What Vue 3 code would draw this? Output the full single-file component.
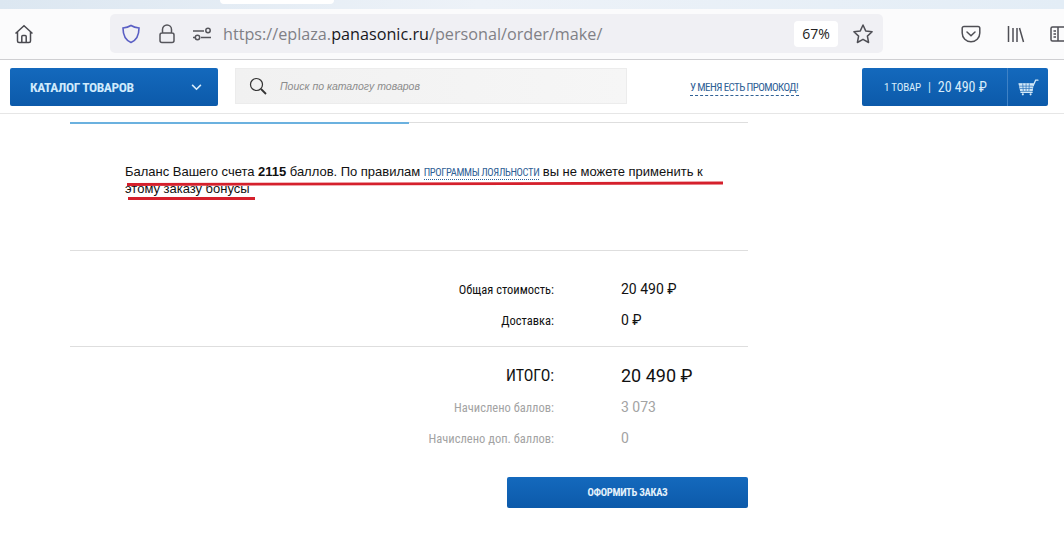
<script setup>
const totals = [
  { label: 'Общая стоимость:', value: '20 490 ₽' },
  { label: 'Доставка:', value: '0 ₽' },
]
const bonuses = [
  { label: 'Начислено баллов:', value: '3 073' },
  { label: 'Начислено доп. баллов:', value: '0' },
]
</script>

<template>
  <div class="page">
    <div class="tabstrip"><div class="tab-stub"></div></div>

    <div class="toolbar">
      <svg class="home" viewBox="0 0 20 20" width="20" height="20" fill="none" stroke="#4a4a50" stroke-width="1.5">
        <path d="M1.500 9.500 10 1.800l8.500 7.700M3.500 8v9a1.500 1.500 0 0 0 1.500 1.500h10a1.500 1.500 0 0 0 1.500-1.500V8M7.800 18.500v-6a1 1 0 0 1 1-1h2.400a1 1 0 0 1 1 1v6" />
      </svg>
      <div class="urlbar">
        <svg viewBox="0 0 20 20" width="20" height="20" fill="none" stroke="#5a5fc4" stroke-width="1.6">
          <path d="M10 1.500c2.400 1.500 5 2.200 8 2.500 0 7-2 12-8 14.500C4 16 2 11 2 4c3-.3 5.600-1 8-2.500z" />
        </svg>
        <svg class="lock" viewBox="0 0 18 20" width="18" height="20" fill="none" stroke="#55555b" stroke-width="1.5">
          <path d="M4.500 9V5.500a4.500 4.500 0 0 1 9 0V9M4 9h10a2 2 0 0 1 2 2v5.500a2 2 0 0 1-2 2H4a2 2 0 0 1-2-2V11a2 2 0 0 1 2-2z" />
        </svg>
        <svg class="sliders" viewBox="0 0 20 14" width="20" height="14" fill="none" stroke="#55555b" stroke-width="1.500">
          <path d="M1 4h11M1 10.500h2M9 10.500h10" />
          <circle cx="16" cy="3.500" r="2.200" />
          <circle cx="5.500" cy="10.500" r="2.200" />
        </svg>
        <div class="url">https://eplaza.<span class="host">panasonic.ru</span>/personal/order/make/</div>
        <div class="zoom-pill">67%</div>
        <svg class="star" viewBox="0 0 22 22" width="22" height="22" fill="none" stroke="#4f4f55" stroke-width="1.500" stroke-linejoin="round">
          <path d="m11 2 2.700 5.900 6.400.8-4.700 4.400 1.200 6.400L11 16.300l-5.600 3.200 1.200-6.400-4.700-4.400 6.400-.8z" />
        </svg>
      </div>
      <svg class="pocket" viewBox="0 0 20 18" width="20" height="18" fill="none" stroke="#4f4f55" stroke-width="1.500">
        <path d="M3 1.500h14a1.800 1.800 0 0 1 1.800 1.800V8a8.800 8.800 0 0 1-17.600 0V3.300A1.800 1.800 0 0 1 3 1.500z" />
        <path d="m6 7 4 3.800L14 7" stroke-linecap="round" />
      </svg>
      <svg class="library" viewBox="0 0 18 18" width="18" height="18" fill="none" stroke="#4f4f55" stroke-width="1.500">
        <path d="M1.500 1v16M6 3v14M10 3v14M12.500 3l4 14" />
      </svg>
      <svg class="sidebar" viewBox="0 0 18 16" width="18" height="16" fill="none" stroke="#4f4f55" stroke-width="1.500">
        <path d="M2.500 1h20v14h-20a1.500 1.500 0 0 1-1.500-1.500v-11A1.500 1.500 0 0 1 2.500 1zM8 1v14M3.500 5H6M3.500 8H6M3.500 11H6" />
      </svg>
    </div>

    <header class="site-header">
      <button class="catalog-btn">
        <span class="narrow catalog-label">КАТАЛОГ ТОВАРОВ</span>
        <svg viewBox="0 0 12 8" width="11" height="7" fill="none" stroke="#d8ecfa" stroke-width="1.800"><path d="m1 1 5 5 5-5" /></svg>
      </button>
      <div class="search">
        <svg viewBox="0 0 18 18" width="18" height="18" fill="none" stroke="#333" stroke-width="1.200">
          <circle cx="7.500" cy="7.500" r="6" />
          <path d="m12 12 5 5" stroke-width="1.800" />
        </svg>
        <span class="search-text">Поиск по каталогу товаров</span>
      </div>
      <a class="promo narrow">У МЕНЯ ЕСТЬ ПРОМОКОД!</a>
      <div class="cart">
        <div class="cart-sum narrow">
          <span>1 ТОВАР</span>
          <span class="cart-sep">|</span>
          <span class="cart-price">20 490 ₽</span>
        </div>
        <div class="cart-icon">
          <svg viewBox="0 0 20 16" width="21" height="17" fill="none" stroke="#d4e9f8" stroke-linecap="round">
            <path d="M1 4.500h13.500l-1 6.500H2.500z" fill="#d4e9f8" stroke-width="1" />
            <path d="M1.500 6.700h12.500M2 8.900h11.500M4.500 4.500 5 11M7.700 4.500V11M10.800 4.500 10.400 11" stroke="#2a74bd" stroke-width=".7" />
            <path d="M14.500 6 16.800 1H19M2.800 12.600h10.700" stroke-width="1.200" />
            <circle cx="4.600" cy="14.500" r="1" fill="#d4e9f8" stroke="none" />
            <circle cx="12" cy="14.500" r="1" fill="#d4e9f8" stroke="none" />
          </svg>
        </div>
      </div>
    </header>

    <main class="order">
      <div class="steps"><div class="steps-active"></div></div>

      <p class="balance">
        Баланс Вашего счета <b>2115</b> баллов. По правилам
        <a class="loyalty narrow">ПРОГРАММЫ ЛОЯЛЬНОСТИ</a>
        вы не можете применить к этому заказу бонусы
      </p>

      <div class="summary">
        <div class="rows first-rows">
          <div v-for="row in totals" :key="row.label" class="row">
            <span class="label narrow">{{ row.label }}</span>
            <span class="value">{{ row.value }}</span>
          </div>
        </div>
        <div class="rows second-rows">
          <div class="row total">
            <span class="label narrow">ИТОГО:</span>
            <span class="value">20 490 ₽</span>
          </div>
          <div v-for="row in bonuses" :key="row.label" class="row muted">
            <span class="label narrow">{{ row.label }}</span>
            <span class="value">{{ row.value }}</span>
          </div>
        </div>
        <div class="actions">
          <button class="submit narrow">ОФОРМИТЬ ЗАКАЗ</button>
        </div>
      </div>
    </main>

    <svg class="marks" width="1064" height="539" fill="none" stroke="#d5202c" stroke-width="2.800">
      <path d="M127 184.500 723 183" />
      <path d="M128 198.500h127" />
    </svg>
  </div>
</template>

<style scoped>
.page {
  position: relative;
  width: 1064px;
  height: 539px;
  overflow: hidden;
  background: #fff;
  font-family: "Liberation Sans", Arial, sans-serif;
  color: #111;
}
.narrow {
  font-family: "Roboto", "Open Sans", sans-serif;
  font-stretch: 75%;
}

.tabstrip {
  height: 9px;
  background: linear-gradient(90deg, #dce7f1, #edf2f8 45%, #e3edf6);
}
.tab-stub {
  width: 114px;
  height: 4px;
  margin-left: 220px;
  background: #fff;
  border-radius: 0 0 4px 4px;
}
.toolbar {
  height: 51px;
  box-sizing: border-box;
  display: flex;
  align-items: center;
  padding: 0 0 1px 14px;
  background: #fbfbfc;
  border-bottom: 1px solid #cfcfd2;
}
.toolbar > svg,
.urlbar > svg {
  flex: none;
}
.urlbar {
  flex: none;
  width: 773px;
  height: 39px;
  margin-left: 76px;
  display: flex;
  align-items: center;
  box-sizing: border-box;
  padding-left: 11px;
  background: #f0f0f4;
  border-radius: 5px;
}
.lock {
  margin-left: 17px;
}
.sliders {
  margin-left: 16px;
}
.url {
  flex: 1;
  margin-left: 11px;
  font-family: "Open Sans", sans-serif;
  font-size: 16.200px;
  color: #808086;
  white-space: nowrap;
}
.host {
  color: #18181c;
}
.zoom-pill {
  width: 44px;
  height: 26px;
  line-height: 26px;
  text-align: center;
  background: #fff;
  border-radius: 4px;
  font-family: "Open Sans", sans-serif;
  font-size: 14px;
  color: #222;
}
.star {
  margin: 0 9px 0 14px;
}
.pocket {
  margin-left: 78px;
}
.library {
  margin-left: 26px;
}
.sidebar {
  margin-left: 25px;
  overflow: hidden;
}

.site-header {
  height: 54px;
  box-sizing: border-box;
  display: flex;
  align-items: flex-start;
  padding: 8px 16px 0 10px;
  border-bottom: 1px solid #e6e6e6;
}
.catalog-btn {
  width: 208px;
  height: 38px;
  display: flex;
  align-items: center;
  justify-content: space-between;
  padding: 0 16px 0 20px;
  border: none;
  border-radius: 2px;
  background: linear-gradient(180deg, #1469bd, #0c5aaa);
}
.catalog-label {
  font-size: 13.500px;
  font-weight: 700;
  letter-spacing: -0.4px;
  color: #cfeafc;
}
.search {
  width: 392px;
  height: 36px;
  margin-left: 17px;
  box-sizing: border-box;
  display: flex;
  align-items: center;
  padding-left: 13px;
  background: linear-gradient(90deg, #f1f1f1, #f6f6f6);
  border: 1px solid #ececec;
}
.search-text {
  margin-left: 13px;
  font-size: 10.500px;
  font-style: italic;
  color: #8c8c8c;
}
.promo {
  width: 109px;
  margin: 13px 0 0 63px;
  font-size: 11px;
  letter-spacing: -0.6px;
  line-height: 14px;
  white-space: nowrap;
  color: #2f6196;
  border-bottom: 1px dashed #2f6196;
}
.cart {
  width: 186px;
  height: 38px;
  margin-left: auto;
  display: flex;
  border-radius: 2px;
  background: linear-gradient(180deg, #1469bd, #0c5aaa);
}
.cart-sum {
  flex: 1;
  display: flex;
  align-items: center;
  padding-left: 22px;
  gap: 7px;
  font-size: 11px;
  letter-spacing: -0.2px;
  color: #d8ecfa;
  white-space: nowrap;
}
.cart-sep {
  font-size: 12px;
}
.cart-price {
  font-size: 14px;
  letter-spacing: 0;
}
.cart-icon {
  width: 40px;
  display: flex;
  align-items: center;
  justify-content: center;
  border-left: 1px solid #3f82c6;
}

.order {
  width: 678px;
  margin-left: 70px;
}
.steps {
  height: 1px;
  margin-top: 8px;
  background: #dedede;
}
.steps-active {
  width: 339px;
  height: 2px;
  background: #6bb1df;
}
.balance {
  height: 128px;
  box-sizing: border-box;
  margin: 0;
  padding: 41px 20px 0 55px;
  font-size: 13px;
  word-spacing: -0.1px;
  line-height: 16px;
  color: #111;
  border-bottom: 1px solid #dedede;
}
.loyalty {
  font-size: 10.500px;
  letter-spacing: -0.35px;
  color: #2f6196;
  border-bottom: 1px dotted #2f6196;
}
.rows {
  display: flex;
  flex-direction: column;
}
.first-rows {
  padding: 28px 0 16px;
  gap: 11px;
  border-bottom: 1px solid #dedede;
}
.second-rows {
  padding-top: 16px;
  gap: 11px;
}
.row {
  display: flex;
  align-items: center;
  height: 20px;
  font-size: 12.500px;
}
.label {
  width: 484px;
  text-align: right;
}
.value {
  margin-left: 67px;
  font-family: "Roboto", sans-serif;
  font-stretch: 90%;
  font-size: 14px;
}
.total {
  height: 24px;
  margin-bottom: -1px;
}
.total .label {
  font-size: 16px;
}
.total .value {
  font-size: 18px;
}
.muted {
  color: #a3a3a3;
}
.actions {
  display: flex;
  justify-content: flex-end;
  margin-top: 29px;
}
.submit {
  width: 241px;
  height: 31px;
  border: none;
  border-radius: 2px;
  background: linear-gradient(180deg, #1469bd, #0c5aaa);
  color: #e3f1fb;
  font-size: 10.500px;
  font-weight: 700;
  letter-spacing: -0.3px;
}
.marks {
  position: absolute;
  left: 0;
  top: 0;
  pointer-events: none;
}
</style>
